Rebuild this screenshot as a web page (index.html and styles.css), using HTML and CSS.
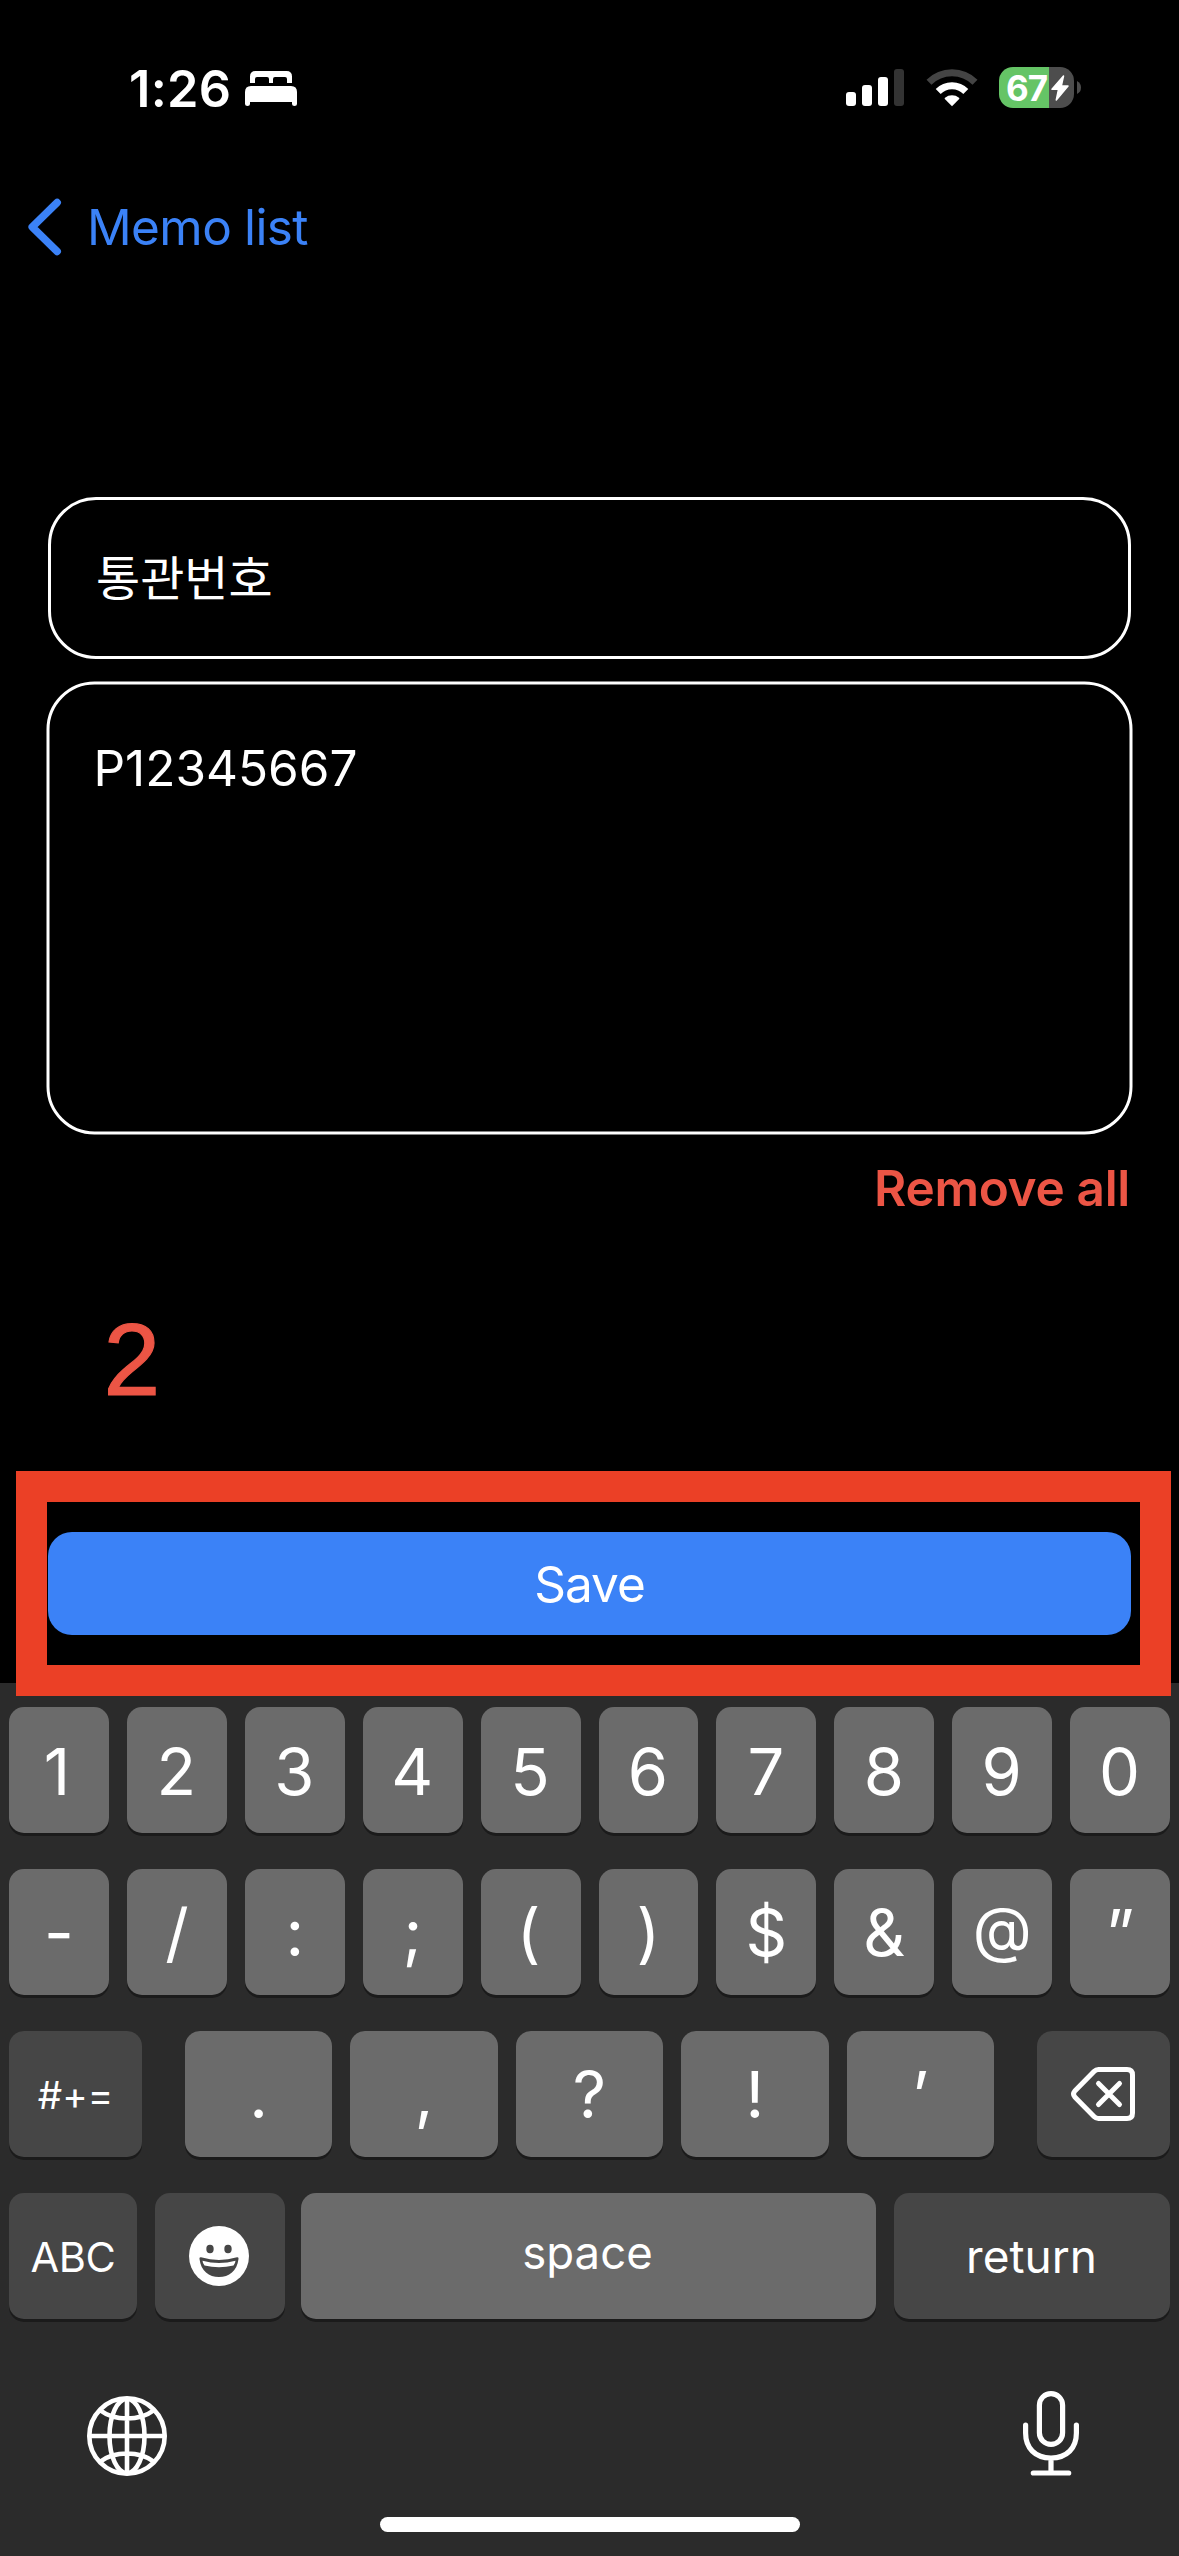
FILE: index.html
```html
<!DOCTYPE html>
<html lang="en">
<head>
<meta charset="utf-8">
<title>Memo</title>
<link rel="stylesheet" href="styles.css">
</head>
<body>
<header class="status">
  <span class="clock">1:26</span>
  <svg class="bed" width="52" height="36" viewBox="0 0 52 36"><path fill="#fff" d="M5 12V5.500Q5 0 10.500 0H41.500Q47 0 47 5.500V12H42V8Q42 6 40 6H30Q28 6 28 8V12H24V8Q24 6 22 6H12Q10 6 10 8V12ZM0 33V21Q0 15 6 15H46Q52 15 52 21V33Q52 35 49.500 35T47 33V31H5V33Q5 35 2.500 35T0 33Z"/></svg>
  <svg class="signal" width="58" height="37" viewBox="0 0 58 37"><g fill="#fff"><rect y="23" width="10" height="14" rx="3"/><rect x="16" y="16" width="10" height="21" rx="3"/><rect x="32" y="8" width="10" height="29" rx="3"/></g><rect x="48" width="10" height="37" rx="3" fill="#333"/></svg>
  <svg class="wifi" width="52" height="38" viewBox="0 0 52 38"><g fill="none" stroke-width="7"><path stroke="#444" d="M3 13.300A32.500 32.500 0 0 1 49 13.300"/><path stroke="#fff" d="M12.200 22.500A19.500 19.500 0 0 1 39.800 22.500"/></g><path fill="#fff" d="M26 37.200L18.800 30Q18.300 29.300 19 28.700A11.300 11.300 0 0 1 33 28.700Q33.700 29.300 33.200 30Z"/></svg>
  <div class="battery"><span class="level">67</span><svg class="bolt" width="18" height="26" viewBox="0 0 18 26"><path fill="#fff" stroke="#fff" stroke-width="1.500" stroke-linejoin="round" d="M12.500 1L1 14.300H7.500L5.300 25L17 11H10.300Z"/></svg></div>
  <svg class="nub" width="4" height="13" viewBox="0 0 4 13"><path fill="#4d4d4d" d="M0 0Q4 2 4 6.500T0 13Z"/></svg>
</header>
<nav class="nav">
  <svg width="34" height="58" viewBox="0 0 34 58"><path fill="none" stroke="#3b82f7" stroke-width="7.500" stroke-linecap="round" stroke-linejoin="round" d="M29.200 4.500L4.200 29L29.200 53.500"/></svg>
  <a class="back">Memo list</a>
</nav>
<main class="form">
  <div class="field title">통관번호</div>
  <div class="field memo"><span>P12345667</span></div>
  <div class="remove">Remove all</div>
  <button class="save">Save</button>
</main>
<div class="step">2</div>
<div class="frame"></div>
<section class="keyboard">
  <div class="row digits"><b class="one">1</b><b>2</b><b>3</b><b>4</b><b>5</b><b>6</b><b>7</b><b>8</b><b>9</b><b>0</b></div>
  <div class="row"><b>-</b><b>/</b><b>:</b><b>;</b><b class="paren">(</b><b>)</b><b>$</b><b>&amp;</b><b class="at">@</b><b>”</b></div>
  <div class="row third"><b class="dark sym">#+=</b><b>.</b><b>,</b><b>?</b><b>!</b><b>’</b><b class="dark"><svg class="delete" width="66" height="56" viewBox="0 0 66 56"><g fill="none" stroke="#fff" stroke-width="5" stroke-linecap="round" stroke-linejoin="round"><path d="M28.500 3.500H57Q62.500 3.500 62.500 9V47Q62.500 52.500 57 52.500H28.500Q26 52.500 24 50.500L4.800 31Q2.300 28 4.800 25L24 5.500Q26 3.500 28.500 3.500Z"/><path d="M28.500 17.500L49.500 38.500M49.500 17.500L28.500 38.500"/></g></svg></b></div>
  <div class="row fourth"><b class="dark abc">ABC</b><b class="dark emoji"><svg class="smiley" width="60" height="60" viewBox="0 0 60 60"><circle cx="30" cy="30" r="30" fill="#fff"/><g fill="#464646"><ellipse cx="21" cy="23" rx="3.700" ry="4.200"/><ellipse cx="39" cy="23" rx="3.700" ry="4.200"/><path d="M10.500 33Q10 31 12 31.300Q30 36.500 48 31.300Q50 31 49.500 33C48 45 40 51 30 51S12 45 10.500 33Z"/></g><path fill="#fff" d="M13.500 34.700Q30 39.500 46.500 34.700Q46.300 37.500 44.500 39.500Q30 43 15.500 39.500Q13.700 37.500 13.500 34.700Z"/></svg></b><b class="space">space</b><b class="dark return">return</b></div>
  <div class="tools">
    <svg width="80" height="80" viewBox="0 0 80 80"><g fill="none" stroke="#fff" stroke-width="4.600"><circle cx="40" cy="40" r="37.700"/><ellipse cx="40" cy="40" rx="17.500" ry="37"/><path d="M40 2V78M2 40H78M13.500 14.500Q24 22.500 40 22.500T66.500 14.500M13.500 65.500Q24 57.500 40 57.500T66.500 65.500"/></g></svg>
    <svg class="mic" width="56" height="85" viewBox="0 0 56 85"><g fill="none" stroke="#fff" stroke-width="5.200" stroke-linecap="round"><rect x="16.400" y="2.600" width="23.200" height="50.800" rx="11.600"/><path d="M2.600 34V42C2.600 57 12 67 28 67S53.400 57 53.400 42V34M28 67V82M10.300 82H45.700"/></g></svg>
  </div>
  <div class="home"></div>
</section>
</body>
</html>
```
FILE: styles.css
```css
* { box-sizing: border-box; }
body {
  margin: 0;
  width: 1179px;
  height: 2556px;
  position: relative;
  display: flex;
  flex-direction: column;
  overflow: hidden;
  background: #000;
  color: #fff;
  font-family: Inter, "Noto Sans CJK KR", sans-serif;
}
svg { display: block; flex: none; }

/* status bar */
.status { height: 172px; padding: 67px 0 0 129px; display: flex; align-items: flex-start; }
.clock { width: 116px; font-size: 50.500px; line-height: 43px; font-weight: 600; letter-spacing: .3px; white-space: nowrap; }
.bed { margin-top: 4px; }
.signal { margin: 2px 0 0 549px; }
.wifi { margin: 2px 0 0 21.500px; }
.battery {
  margin-left: 21.500px;
  width: 75px;
  height: 41px;
  border-radius: 14px;
  background: linear-gradient(90deg, #65c466 50px, #4d4d4d 50px);
  display: flex;
  align-items: flex-start;
}
.level { width: 52px; padding-left: 7px; font-size: 35px; line-height: 42px; font-weight: 700; letter-spacing: -1px; }
.bolt { margin-top: 8px; }
.nub { margin: 14px 0 0 3px; }

/* navigation */
.nav { height: 325px; padding: 26px 0 0 28px; display: flex; align-items: flex-start; }
.back { margin-left: 25px; color: #3b82f7; font-size: 49.500px; line-height: 58px; letter-spacing: -.6px; word-spacing: -.5px; }

/* form */
.form { height: 1186px; padding: 0 48px; display: flex; flex-direction: column; }
.field { border: 3px solid #fff; border-radius: 48px; flex: none; }
.title { height: 162px; padding: 0 0 4px 45px; font-size: 48px; line-height: 151px; font-family: "Noto Sans CJK KR", sans-serif; }
.memo { height: 453px; margin: 22px -2px 0 -2px; width: 1086px; padding: 50px 0 0 44px; font-size: 49.500px; line-height: 66px; transform: translate(.5px, .5px); }
.remove { margin-top: 24px; padding-right: 1px; height: 59px; line-height: 60px; text-align: right; color: #ec5545; font-size: 49.500px; font-weight: 600; letter-spacing: -.300px; }
.save {
  margin-top: 315px;
  height: 103px;
  border: 0;
  border-radius: 24px;
  background: #3b82f7;
  color: #fff;
  font: 49.500px/104px Inter, sans-serif;
  letter-spacing: -1px;
  padding: 0;
}

/* annotations over the screen */
.step { position: absolute; left: 103.500px; top: 1300px; color: #ec5545; font: 102px/120px "Liberation Sans", sans-serif; -webkit-text-stroke: 1.200px #ec5545; }
.frame { position: absolute; left: 16px; top: 1471px; width: 1155px; height: 225px; border: 31px solid #eb4026; }

/* keyboard */
.keyboard { flex: 1; padding: 24px 9px 0; background: #2b2b2b; display: flex; flex-direction: column; gap: 36px; }
.row { height: 126px; display: grid; grid-template: 126px / repeat(10, 1fr); column-gap: 18px; flex: none; }
.row b {
  display: flex;
  justify-content: center;
  border-radius: 15px;
  background: #6b6b6b;
  box-shadow: 0 3px 0 #1b1b1b;
  font-size: 65px;
  line-height: 127px;
  font-weight: 400;
}
.digits b { line-height: 129px; padding-right: 1px; }
.digits .one { padding-right: 4px; }
.row .paren { padding-right: 4px; }
.row .at { font-size: 61px; line-height: 121px; }
.row .dark { background: #464646; }
.third { display: flex; gap: 18px; }
.third b { width: 147.400px; flex: none; }
.third b.dark { width: 133px; }
.third b:nth-child(2) { margin-left: 25px; }
.third b.dark:last-child { margin-left: 25px; }
.row .sym { font-size: 38.500px; line-height: 128px; }
.fourth { grid-template-columns: 128px 128px 575px 276px; }
.fourth .emoji { width: 130px; }
.row .abc { font-size: 41.500px; line-height: 129px; letter-spacing: -.3px; }
.row .space { font-size: 45.500px; line-height: 119px; padding-right: 2px; }
.row .return { font-size: 46px; line-height: 127px; padding-right: 1px; }
.delete { margin-top: 35px; }
.smiley { margin: 33px 0 0 -2px; }
.tools { padding: 36px 91px 0 78px; display: flex; justify-content: space-between; align-items: flex-start; height: 126px; }
.tools svg:first-child { margin-top: 5px; }
.home { width: 420px; height: 15px; border-radius: 7.500px; background: #fff; margin-left: 371px; }
```
